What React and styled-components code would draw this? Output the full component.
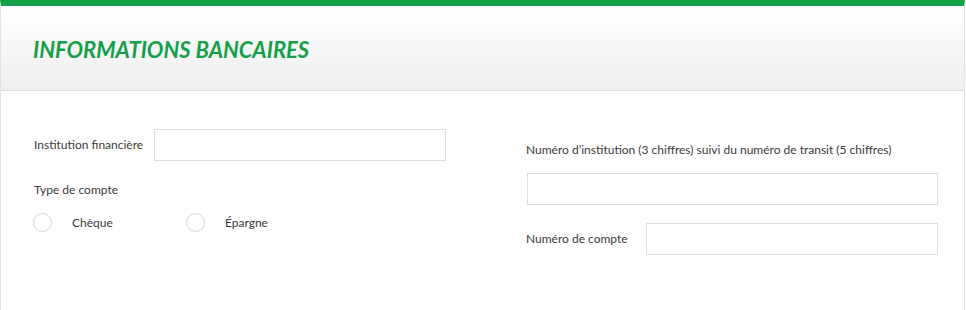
import React from "react";
import styled, { createGlobalStyle } from "styled-components";

const GlobalStyle = createGlobalStyle`
  html, body {
    margin: 0;
    padding: 0;
    background: #fff;
  }
  body {
    font-family: Lato, "Open Sans", sans-serif;
    color: #333;
  }
`;

const Panel = styled.section`
  width: 965px;
  height: 310px;
  box-sizing: border-box;
  border-top: 6px solid #14a049;
  border-left: 1px solid #e3e3e3;
  border-right: 1px solid #e3e3e3;
  background: #fff;
`;

const Header = styled.header`
  height: 85px;
  box-sizing: border-box;
  display: flex;
  align-items: center;
  padding-left: 32px;
  background: linear-gradient(#ffffff, #efefef);
  border-bottom: 1px solid #dcdcdc;
`;

const Title = styled.h2`
  margin: 0;
  padding-top: 2px;
  font-family: Lato, sans-serif;
  font-size: 22px;
  font-weight: 700;
  font-style: italic;
  color: #14a049;
`;

const Body = styled.div`
  display: grid;
  grid-template-columns: 1fr 1fr;
  column-gap: 80px;
  padding: 38px 26px 0 33px;
`;

const Column = styled.div`
  display: flex;
  flex-direction: column;
`;

const InlineField = styled.div`
  display: flex;
  align-items: center;
  gap: ${(p) => p.$gap || 11}px;
  margin-top: ${(p) => p.$top || 0}px;
`;

const Label = styled.label`
  font-size: 12px;
  line-height: 16px;
  color: #3a3a3a;
  white-space: nowrap;
  margin-top: ${(p) => p.$top || 0}px;
`;

const Input = styled.input`
  flex: 1;
  height: 32px;
  box-sizing: border-box;
  border: 1px solid #dedede;
  background: #fff;
  outline: none;
  font: inherit;
  margin-top: ${(p) => p.$top || 0}px;
  margin-left: ${(p) => p.$left || 0}px;
`;

const RadioGroup = styled.div`
  display: flex;
  margin-top: 15px;
  margin-left: -1px;
`;

const RadioOption = styled.label`
  display: flex;
  align-items: center;
  gap: 20px;
  width: 153px;
  font-size: 12px;
  color: #3a3a3a;
`;

const RadioCircle = styled.span`
  width: 19px;
  height: 19px;
  box-sizing: border-box;
  border-radius: 50%;
  border: 1px solid #d8d8d8;
  background: #fff;
`;

export default function App() {
  return (
    <>
      <GlobalStyle />
      <Panel>
        <Header>
          <Title>INFORMATIONS BANCAIRES</Title>
        </Header>
        <Body>
          <Column>
            <InlineField>
              <Label>Institution financière</Label>
              <Input type="text" />
            </InlineField>
            <Label $top={21}>Type de compte</Label>
            <RadioGroup>
              <RadioOption>
                <RadioCircle />
                Chèque
              </RadioOption>
              <RadioOption>
                <RadioCircle />
                Épargne
              </RadioOption>
            </RadioGroup>
          </Column>
          <Column>
            <Label $top={13}>
              Numéro d’institution (3 chiffres) suivi du numéro de transit (5 chiffres)
            </Label>
            <InlineField>
              <Input type="text" $top={15} $left={1} />
            </InlineField>
            <InlineField $top={18} $gap={18}>
              <Label>Numéro de compte</Label>
              <Input type="text" />
            </InlineField>
          </Column>
        </Body>
      </Panel>
    </>
  );
}
